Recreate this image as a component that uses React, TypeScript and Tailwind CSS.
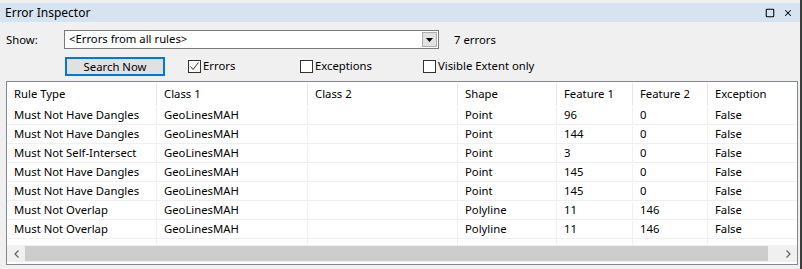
import { Square, X } from "lucide-react"

const columns = [
  { label: "Rule Type", w: "w-[150px]" },
  { label: "Class 1", w: "w-[151px]" },
  { label: "Class 2", w: "w-[150px]" },
  { label: "Shape", w: "w-[99px]" },
  { label: "Feature 1", w: "w-[76px]" },
  { label: "Feature 2", w: "w-[75px]" },
  { label: "Exception", w: "w-[88px]" },
]

const rows = [
  ["Must Not Have Dangles", "GeoLinesMAH", "", "Point", "96", "0", "False"],
  ["Must Not Have Dangles", "GeoLinesMAH", "", "Point", "144", "0", "False"],
  ["Must Not Self-Intersect", "GeoLinesMAH", "", "Point", "3", "0", "False"],
  ["Must Not Have Dangles", "GeoLinesMAH", "", "Point", "145", "0", "False"],
  ["Must Not Have Dangles", "GeoLinesMAH", "", "Point", "145", "0", "False"],
  ["Must Not Overlap", "GeoLinesMAH", "", "Polyline", "11", "146", "False"],
  ["Must Not Overlap", "GeoLinesMAH", "", "Polyline", "11", "146", "False"],
]

function CheckBox({ checked, label }: { checked?: boolean; label: string }) {
  return (
    <label className="flex items-center gap-[2px]">
      <span className="flex h-[13px] w-[13px] items-center justify-center border border-[#333] bg-white">
        {checked && (
          <svg width="11" height="11" viewBox="0 0 11 11">
            <path d="M1.5 5.5 L4 8.5 L9.5 1.5" fill="none" stroke="#333" strokeWidth="1" />
          </svg>
        )}
      </span>
      <span>{label}</span>
    </label>
  )
}

export default function App() {
  return (
    <div className="h-[269px] w-[802px] overflow-hidden border-r-2 border-[#3c3c3c] bg-[#f0f0f0] font-['Noto_Sans',sans-serif] text-[11.3px] text-black">
      <div className="pt-[3px]">
        <div className="flex h-[19px] items-center justify-between bg-[#d6e3f0] pl-[5px] pr-[7px] text-[12px]">
          <span>Error Inspector</span>
          <div className="flex items-center gap-[8px]">
            <Square className="h-[10px] w-[10px]" strokeWidth={2.5} absoluteStrokeWidth />
            <X className="h-[10px] w-[10px]" strokeWidth={2.5} absoluteStrokeWidth />
          </div>
        </div>
      </div>

      <div className="flex h-[27px] items-end pl-[6px]">
        <span className="w-[58px]">Show:</span>
        <div className="flex h-[19px] w-[375px] items-center justify-between border border-[#7a7a7a] bg-white pl-[4px] pr-[1px]">
          <span>&lt;Errors from all rules&gt;</span>
          <span className="flex h-[15px] w-[15px] items-center justify-center border border-[#adadad] bg-[#e1e1e1]">
            <svg width="7" height="4" viewBox="0 0 7 4">
              <path d="M0 0 H7 L3.5 4 Z" fill="#000" />
            </svg>
          </span>
        </div>
        <span className="pl-[15px]">7 errors</span>
      </div>

      <div className="mt-[8px] flex h-[19px] items-center pl-[65px]">
        <button className="h-[19px] w-[100px] border-2 border-[#0078d7] bg-[#e1e1e1] leading-none">
          Search Now
        </button>
        <div className="ml-[23px] w-[112px]">
          <CheckBox checked label="Errors" />
        </div>
        <div className="w-[123px]">
          <CheckBox label="Exceptions" />
        </div>
        <div>
          <CheckBox label="Visible Extent only" />
        </div>
      </div>

      <div className="ml-[6px] mt-[5px] h-[184px] w-[792px] border border-[#828790] bg-white">
        <div className="flex h-[24px] pt-[1px]">
          {columns.map((c, i) => (
            <div
              key={c.label}
              className={`${c.w} flex items-center pl-[7px] ${i < columns.length - 1 ? "border-r border-[#e5e5e5]" : ""}`}
            >
              {c.label}
            </div>
          ))}
        </div>
        {rows.map((r, ri) => (
          <div key={ri} className="flex h-[19px] border-b border-[#f0f0f0] pt-[1px]">
            {r.map((cell, ci) => (
              <div
                key={ci}
                className={`${columns[ci].w} flex items-center pl-[7px] ${ci < r.length - 1 ? "border-r border-[#f0f0f0]" : ""}`}
              >
                {cell}
              </div>
            ))}
          </div>
        ))}
        <div className="flex h-[6px]">
          {columns.map((c, i) => (
            <div key={i} className={`${c.w} ${i < columns.length - 1 ? "border-r border-[#f0f0f0]" : ""}`} />
          ))}
        </div>
        <div className="flex h-[17px] items-center bg-[#f0f0f0]">
          <span className="flex w-[18px] justify-center">
            <svg width="5" height="8" viewBox="0 0 5 8">
              <path d="M4.5 0.5 L1 4 L4.5 7.5" fill="none" stroke="#606060" strokeWidth="1.2" />
            </svg>
          </span>
          <div className="h-[15px] w-[743px] bg-[#cdcdcd]" />
          <div className="flex-1" />
          <span className="flex w-[17px] justify-center">
            <svg width="5" height="8" viewBox="0 0 5 8">
              <path d="M0.5 0.5 L4 4 L0.5 7.5" fill="none" stroke="#606060" strokeWidth="1.2" />
            </svg>
          </span>
        </div>
      </div>
    </div>
  )
}
